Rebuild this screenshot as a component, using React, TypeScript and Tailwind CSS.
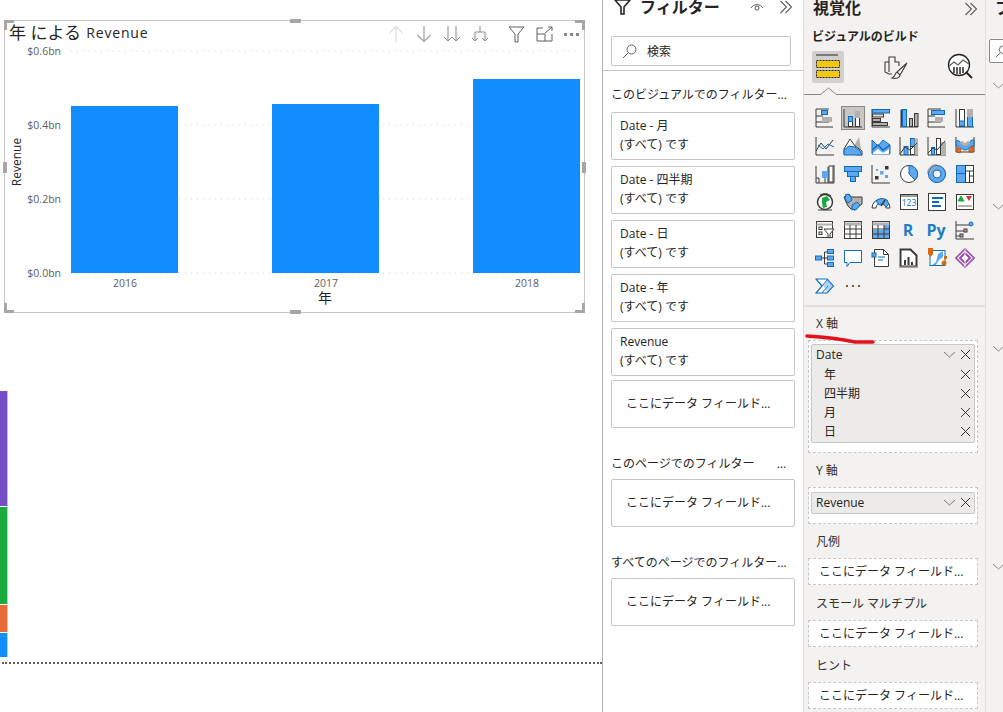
import React from "react";

const D = "#3b3a39";
const B = "#0f6cbd";
const F = "#5fa8ee";
const G = "#b3b0ad";

const Ic = ({ children }: { children: React.ReactNode }) => (
  <svg width="20" height="20" viewBox="0 0 20 20" fill="none" strokeWidth="1" className="block">
    {children}
  </svg>
);

const icons: React.ReactNode[] = [
  <><path d="M1 1v18h17M1 1h13M1 8h7M1 14h13" stroke={D} /><rect x="6.5" y="2.5" width="6" height="4" fill={F} stroke={B} /><rect x="7.5" y="9.5" width="9" height="4" fill={G} stroke={G} /></>,
  <><path d="M1 1v18h18" stroke={D} /><rect x="5.5" y="8.5" width="4" height="10" fill="#fff" stroke={D} /><rect x="5.5" y="8.5" width="4" height="5" fill={F} stroke={B} /><rect x="12.5" y="3.5" width="4" height="15" fill="#fff" stroke={D} /><rect x="12.5" y="3.5" width="4" height="6" fill={G} stroke={G} /></>,
  <><path d="M1 1v18h18" stroke={D} /><rect x="1.5" y="1.5" width="17" height="3.5" fill={F} stroke={B} /><rect x="1.5" y="6" width="11" height="3" fill="#ddd" stroke={D} /><rect x="1.5" y="10.5" width="8" height="3" fill={G} stroke={D} /><rect x="1.5" y="14.5" width="15" height="3" fill={G} stroke={D} /></>,
  <><path d="M1 19h18" stroke={D} /><rect x="1.5" y="1.5" width="4" height="17" fill={D} /><rect x="3.5" y="1.5" width="4" height="17" fill={F} stroke={B} /><rect x="10.5" y="10.5" width="3" height="8" fill={G} stroke={D} /><rect x="15.5" y="5.5" width="3.5" height="13" fill={G} stroke={D} /></>,
  <><path d="M1 1v18h17M1 1h13M1 8h7M1 14h13" stroke={D} /><rect x="4.5" y="2.5" width="13" height="4" fill={F} stroke={B} /><rect x="8.5" y="9.5" width="7" height="4" fill={G} stroke={G} /></>,
  <><path d="M1 1v18M1 19h18" stroke={D} /><rect x="4.5" y="1.5" width="5" height="17" fill="#fff" stroke={D} /><rect x="4.5" y="1.5" width="5" height="12" fill="#fff" stroke={D} /><rect x="4.5" y="13" width="5" height="5" fill={F} stroke={B} /><rect x="12.5" y="1.5" width="5" height="17" fill={F} stroke={B} /><rect x="12.5" y="1.5" width="5" height="7" fill={G} stroke={G} /></>,

  <><path d="M1 1v18h18" stroke={D} /><path d="M1 15l5-8 5 6 7-9" stroke={D} /><path d="M3 9l5 4 5-5 6 3" stroke={B} /></>,
  <><path d="M1 19l6-14 4 5 5-9 3 18z" fill={G} /><path d="M1 18V13L7 3l5 7 7 5v4z" fill="#fff" stroke={D} /><path d="M1 19v-5l5-4 6 1 5 4 2 4z" fill={F} stroke={B} /></>,
  <><path d="M1 4l6 6 5-6 7 5v9H1z" fill={F} stroke={B} /><path d="M1 14l6-5 5 5 7-5" stroke={B} strokeWidth="1.5" /><path d="M2 17l5-4 5 4 6-4v5H2z" fill="#fff" /></>,
  <><path d="M1 1v18h18" stroke={D} /><rect x="5" y="10.5" width="4" height="8" fill={F} stroke={B} /><rect x="11.5" y="2.5" width="4" height="8" fill={F} stroke={B} /><rect x="11.5" y="10.5" width="4" height="8" fill="#fff" stroke={D} /><rect x="15.5" y="2.5" width="3.5" height="16" fill={G} /><path d="M1 18l5-7 5 3 7-7" stroke={D} /></>,
  <><path d="M1 1v18h18" stroke={D} /><rect x="4.5" y="11.5" width="3" height="7" fill={F} stroke={B} /><rect x="9.5" y="2.5" width="4" height="16" fill="#fff" stroke={D} /><rect x="14.5" y="6.5" width="4" height="12" fill={G} stroke={G} /><path d="M1 17l5-5 4 2 8-9" stroke={D} /></>,
  <><path d="M1 1v15h18V1" stroke={D} /><path d="M1 5c5-2 5 5 9 5s4-7 9-6v6c-5 0-5 4-9 4S5 9 1 10z" fill={F} stroke={B} /><path d="M2 11l4 2-1 4-3-1zM14 13l4-3v6h-4z" fill="#e66c37" stroke="#b45309" /><path d="M6 6l4 3 4-3" stroke={G} strokeWidth="3" /></>,

  <><path d="M1 2v17h18V1M1 14h3v5M7 10h3v9M13 3v16" stroke={D} /><rect x="7" y="7" width="7" height="7" fill={F} /><rect x="14" y="2" width="4" height="16" fill="#fff" stroke={D} /></>,
  <><rect x="1.5" y="2.5" width="17" height="5" fill={F} stroke={B} /><rect x="4.5" y="7.5" width="11" height="5" fill={F} stroke={B} /><rect x="7.5" y="12.5" width="5" height="5" fill={F} stroke={B} /></>,
  <><path d="M1 1v18h18" stroke={D} /><rect x="14" y="2" width="3.5" height="3.5" fill={D} /><rect x="4" y="12" width="3.5" height="3.5" fill={D} /><rect x="9" y="7" width="3.5" height="3.5" fill={F} /><rect x="14" y="11" width="3" height="3" fill={F} /><rect x="5" y="5" width="2" height="2" fill={F} /></>,
  <><circle cx="10" cy="10" r="8.5" fill="#fff" stroke={D} /><path d="M10 1.5a8.5 8.5 0 0 1 6 14.5l-6-6z" fill={F} stroke={B} /></>,
  <><circle cx="10" cy="10" r="6.5" stroke={F} strokeWidth="5" /><path d="M10 1.5a8.5 8.5 0 0 0-8.5 8.5" stroke={G} strokeWidth="3.5" /><circle cx="10" cy="10" r="8.5" stroke={B} /><circle cx="10" cy="10" r="4" stroke={B} fill="#f3f2f1" /></>,
  <><rect x="1.5" y="1.5" width="9" height="8" fill={F} stroke={B} /><rect x="1.5" y="9.5" width="9" height="9" fill={F} stroke={B} /><rect x="10.5" y="1.5" width="8" height="17" fill="#fff" stroke={D} /><path d="M10.5 7h8M14.5 7v11.5M14.5 12h4" stroke={D} /></>,

  <><circle cx="10" cy="10" r="7.5" fill="#fff" stroke={D} strokeWidth="1.5" /><path d="M7 6l5-2 3 4-4 2 1 5-4 1-1-5z" fill="#1aab40" /><path d="M3 18h14M5 3c3-2 8-2 11 1" stroke={D} /></>,
  <><path d="M1 5l5-3 2 3h11v7l-4 3-3 3-4-1-3-3-2-4z" fill={G} stroke={D} /><path d="M3 2l4 1 2 5-4 3-3-4zM9 13l5-3 3 3-4 5-4-1z" fill={F} stroke={B} /></>,
  <><path d="M1 16a9 9 0 0 1 18 0h-4a5 5 0 0 0-10 0z" fill="#fff" stroke={D} /><path d="M5 9a9 9 0 0 1 11-1l2 4-3 3a5 5 0 0 0-7-2z" fill={F} stroke={B} /><path d="M10 14l4-6" stroke={D} strokeWidth="1.5" /></>,
  <><rect x="1.5" y="2.5" width="17" height="15" fill="#fff" stroke={D} /><path d="M1.5 4h17" stroke={D} /><text x="10" y="14" textAnchor="middle" fontSize="8.5" fill="#0f6cbd">123</text></>,
  <><rect x="1.5" y="1.5" width="17" height="17" fill="#fff" stroke={D} /><path d="M5 6h11M5 10h7M5 14h9" stroke={B} strokeWidth="2" /></>,
  <><rect x="1.5" y="2.5" width="17" height="15" fill="#fff" stroke={D} /><path d="M3 9l3-5 3 5z" fill="#1aab40" stroke="#1aab40" /><path d="M11 4h6l-3 5z" fill="#d13438" /><path d="M3 14h14" stroke={G} strokeWidth="2" /></>,

  <><rect x="1.5" y="1.5" width="16" height="16" fill="#fff" stroke={D} /><path d="M1.5 4.5h16" stroke={G} strokeWidth="2" /><rect x="4" y="7" width="3" height="2.5" stroke={D} /><rect x="4" y="12" width="3" height="2.5" stroke={D} /><path d="M9 9h10l-4 5v4l-2-1v-3z" fill="#fff" stroke={D} /></>,
  <><rect x="1.5" y="1.5" width="17" height="17" fill="#fff" stroke={D} /><path d="M1.5 4h17" stroke={G} strokeWidth="3" /><path d="M1.5 9h17M1.5 14h17M7 5v14M13 5v14" stroke={D} /></>,
  <><rect x="1.5" y="1.5" width="17" height="17" fill="#fff" stroke={D} /><rect x="2" y="10" width="16" height="8" fill={F} /><rect x="13" y="5" width="5" height="13" fill={F} /><path d="M1.5 4h17" stroke={G} strokeWidth="3" /><path d="M1.5 9h17M1.5 14h17M7 5v14M13 5v14" stroke={D} /></>,
  <text x="9" y="16" textAnchor="middle" fontSize="16" fontWeight="700" fill="#1f7fc4">R</text>,
  <text x="9" y="15.5" textAnchor="middle" fontSize="16" fontWeight="700" fill="#1f7fc4">Py</text>,
  <><path d="M1 1v18h18" stroke={D} /><path d="M1 5h14M1 11h8M1 16h4" stroke={D} /><circle cx="16" cy="4" r="2" fill={F} stroke={B} /><rect x="9" y="9" width="3" height="3" fill={G} stroke={D} /><rect x="5" y="14" width="3" height="3" fill={G} stroke={D} /></>,

  <><rect x="0.5" y="8" width="6" height="4" fill={F} stroke={B} /><path d="M6.5 10h3M9.5 4v12M9.5 4h3M9.5 10h3M9.5 16h3" stroke={D} /><rect x="12.5" y="1.5" width="6" height="4" fill={F} stroke={B} /><rect x="12.5" y="8" width="6" height="4" fill={F} stroke={B} /><rect x="12.5" y="14.5" width="6" height="4" fill={F} stroke={B} /></>,
  <path d="M1.5 2.5h17v12H7l-3 4v-4H1.5z" fill="#fff" stroke={B} />,
  <><path d="M3.5 1.5h9l5 5v12h-14z" fill="#fff" stroke={D} /><path d="M12.5 1.5v5h5" stroke={D} /><rect x="1" y="5" width="4" height="4" fill={F} stroke={B} /><path d="M7 9h7M7 12h5" stroke={B} /></>,
  <><path d="M1.5 1.5h10l6 6v11h-16z" fill="#fff" stroke={D} strokeWidth="2" /><rect x="5" y="12" width="2" height="5" fill={D} /><rect x="8.5" y="9" width="2" height="8" fill={D} /><rect x="12" y="14" width="2" height="3" fill={D} /><path d="M0 2v17h18" stroke={G} /></>,
  <><rect x="3" y="2.5" width="15" height="15" fill="#fff" stroke={B} /><path d="M5 17l4-3 2-8 5-3v6l-4 3-3 5z" fill={F} /><path d="M1 0h5v6l-2.5 3L1 6z" fill="#d96b0b" /><circle cx="17" cy="15" r="2.5" fill="#d96b0b" /><rect x="17" y="8" width="3" height="3" fill="#d96b0b" /></>,
  <><path d="M10 1l9 9-9 9-9-9z" fill="#fff" stroke="#9b4bb0" strokeWidth="1.6" /><path d="M10 5l5 5-5 5-5-5z" fill="none" stroke="#9b4bb0" strokeWidth="2" /><path d="M10 1v8M10 11v8" stroke="#f3f2f1" strokeWidth="1" /></>,

  <><path d="M1 3h11l6.5 7-6.5 7H1l6-7z" fill="#fff" stroke={B} strokeWidth="1.2" /><path d="M7 10l6-7M7 17l6-7" stroke={B} /><path d="M8 10l5-6 5 6-5 6z" fill={F} opacity="0.5" /></>,
  <><rect x="3" y="9" width="2" height="2" fill="#8a5a2b" /><rect x="9" y="9" width="2" height="2" fill="#8a5a2b" /><rect x="15" y="9" width="2" height="2" fill="#8a5a2b" /></>,
];

const Chevrons = () => (
  <svg width="14" height="14" viewBox="0 0 14 14" fill="none" stroke="#605e5c" strokeWidth="1.1">
    <path d="M1.5 1l6 6-6 6M6.5 1l6 6-6 6" />
  </svg>
);
const X = () => (
  <svg width="11" height="11" viewBox="0 0 11 11" fill="none" stroke="#252423" strokeWidth="0.9">
    <path d="M1 1l9 9M10 1l-9 9" />
  </svg>
);
const Down = ({ c = "#8a8886" }: { c?: string }) => (
  <svg width="13" height="7" viewBox="0 0 13 7" fill="none" stroke={c} strokeWidth="1">
    <path d="M1 1l5.5 5L12 1" />
  </svg>
);

const Toolbar = () => (
  <div className="flex items-center mr-[5px] mt-[3px]">
    <svg width="176" height="20" viewBox="0 0 176 20" fill="none" stroke="#8a8886" strokeWidth="1">
      <path d="M8 18V3M1.5 9L8 2.500 14.500 9" stroke="#e1dfdd" strokeWidth="1.3" />
      <path d="M36 2v15M29.500 11l6.500 6.500 6.500-6.500" stroke="#a19f9d" strokeWidth="1.2" />
      <path d="M60 2v15M56 13l4 4 4-4M68 2v15M64 13l4 4 4-4" />
      <path d="M92 2v6M87 8h10M87 8v9M97 8v9M84 14l3 3 3-3M94 14l3 3 3-3" />
      <path d="M121 3h15l-6 7v8h-3v-8z" stroke="#605e5c" />
      <path d="M155 4h-6v13h15V10M149 10h8v7M157 9l7-6M160 3h4v4" stroke="#605e5c" />
    </svg>
    <div className="flex gap-[3px]">
      <span className="w-[3px] h-[3px] bg-[#8a8886]" />
      <span className="w-[3px] h-[3px] bg-[#8a8886]" />
      <span className="w-[3px] h-[3px] bg-[#8a8886]" />
    </div>
  </div>
);

const Chart = () => {
  const dots = "1 5";
  return (
    <svg width="579" height="270" viewBox="5 41 579 270" className="block">
      {[51, 125, 199, 273].map((y) => (
        <line key={y} x1="71" x2="580" y1={y} y2={y} stroke="#d2d0ce" strokeDasharray={dots} />
      ))}
      {[
        ["$0.6bn", 55],
        ["$0.4bn", 129],
        ["$0.2bn", 203],
        ["$0.0bn", 277],
      ].map(([t, y]) => (
        <text key={t as string} x="61" y={y as number} textAnchor="end" fontSize="10.500" fill="#605e5c">
          {t}
        </text>
      ))}
      <rect x="71" y="106" width="107" height="167" fill="#118dff" />
      <rect x="272" y="104" width="107" height="169" fill="#118dff" />
      <rect x="473" y="79" width="107" height="194" fill="#118dff" />
      {[
        ["2016", 125],
        ["2017", 326],
        ["2018", 527],
      ].map(([t, x]) => (
        <text key={t as string} x={x as number} y="287" textAnchor="middle" fontSize="10.500" fill="#605e5c">
          {t}
        </text>
      ))}
      <text x="325" y="303" textAnchor="middle" fontSize="14" fill="#252423">
        年
      </text>
      <text x="21" y="162" textAnchor="middle" fontSize="12" fill="#252423" transform="rotate(-90 21 162)">
        Revenue
      </text>
    </svg>
  );
};

const Handles = () => (
  <>
    <span className="absolute -left-[1px] -top-[1px] w-[10px] h-[10px] border-l-[3px] border-t-[3px] border-[#a6a6a6]" />
    <span className="absolute -right-[1px] -top-[1px] w-[10px] h-[10px] border-r-[3px] border-t-[3px] border-[#a6a6a6]" />
    <span className="absolute -left-[1px] -bottom-[1px] w-[10px] h-[10px] border-l-[3px] border-b-[3px] border-[#a6a6a6]" />
    <span className="absolute -right-[1px] -bottom-[1px] w-[10px] h-[10px] border-r-[3px] border-b-[3px] border-[#a6a6a6]" />
    <span className="absolute left-[285px] -top-[2px] w-[11px] h-[4px] bg-[#a6a6a6]" />
    <span className="absolute left-[285px] -bottom-[2px] w-[11px] h-[4px] bg-[#a6a6a6]" />
    <span className="absolute -left-[2px] top-[141px] w-[4px] h-[11px] bg-[#a6a6a6]" />
    <span className="absolute -right-[2px] top-[141px] w-[4px] h-[11px] bg-[#a6a6a6]" />
  </>
);

const Canvas = () => (
  <div className="w-[602px] shrink-0 pt-[20px] bg-white">
    <div className="relative ml-[4px] w-[581px] h-[293px] border border-[#c8c6c4]">
      <Handles />
      <div className="flex items-start justify-between h-[20px]">
        <div className="ml-[4px] mt-[1px] h-[22px] flex items-center text-[17px] leading-[22px] text-[#252423] whitespace-pre">
          年 による <span className="ml-[1px] text-[14px] tracking-[0.8px]">Revenue</span>
        </div>
        <Toolbar />
      </div>
      <Chart />
    </div>
    <div className="mt-[78px] w-[8px] flex flex-col gap-[1px]">
      <div className="h-[115px] bg-[#744ec2] border-r border-[#c5b8e8]" />
      <div className="h-[97px] bg-[#1aab40] border-r border-[#a6ddb3]" />
      <div className="h-[27px] bg-[#e66c37] border-r border-[#f4c3ae]" />
      <div className="h-[24px] bg-[#118dff] border-r border-[#a6d4ff]" />
    </div>
    <div className="mt-[5px] ml-[2px] border-t-2 border-dotted border-[#605e5c]" />
  </div>
);

const FilterCard = ({ a, b }: { a: string; b: string }) => (
  <div className="h-[48px] w-[184px] mb-[6px] border border-[#c8c6c4] rounded-[2px] pl-[8px] pt-[3px] text-[12px] leading-[19px] text-[#252423]">
    <div>{a}</div>
    <div>{b}</div>
  </div>
);
const Drop = ({ cls = "" }: { cls?: string }) => (
  <div className={`h-[48px] w-[184px] border border-[#c8c6c4] rounded-[2px] pl-[14px] flex items-center text-[12px] text-[#252423] whitespace-nowrap ${cls}`}>
    ここにデータ フィールド...
  </div>
);

const FilterPanel = () => (
  <div className="w-[201px] shrink-0 border-l border-[#b3b0ad] bg-white flex flex-col">
    <div className="h-[14px] flex items-center pl-[11px] pr-[10px]">
      <svg width="18" height="16" viewBox="0 0 18 16" fill="none" stroke="#252423" strokeWidth="1.6">
        <path d="M1 1h15l-6 7v7H7V8z" />
      </svg>
      <span className="ml-[8px] text-[16px] font-bold text-[#252423] leading-[14px]">フィルター</span>
      <svg className="ml-auto mr-[15px]" width="14" height="10" viewBox="0 0 14 10" fill="none" stroke="#605e5c">
        <path d="M1 6a7 7 0 0 1 12 0" />
        <circle cx="7" cy="6" r="2" />
      </svg>
      <Chevrons />
    </div>
    <div className="mt-[22px] ml-[8px] w-[180px] h-[30px] border border-[#c8c6c4] rounded-[2px] flex items-center pl-[10px] gap-[10px] pt-[1px] text-[12px] text-[#252423]">
      <svg width="15" height="15" viewBox="0 0 15 15" fill="none" stroke="#605e5c">
        <circle cx="9.500" cy="5.500" r="4.500" />
        <path d="M6 9l-5 5" />
      </svg>
      検索
    </div>
    <div className="mt-[4px] border-b border-[#c8c6c4]" />
    <div className="mt-[16px] h-[16px] pl-[8px] text-[12px] leading-[16px] text-[#252423] whitespace-nowrap">
      このビジュアルでのフィルター…
    </div>
    <div className="mt-[9px] pl-[8px] flex flex-col">
      <FilterCard a="Date - 月" b="(すべて) です" />
      <FilterCard a="Date - 四半期" b="(すべて) です" />
      <FilterCard a="Date - 日" b="(すべて) です" />
      <FilterCard a="Date - 年" b="(すべて) です" />
      <FilterCard a="Revenue" b="(すべて) です" />
      <Drop cls="-mt-[2px]" />
    </div>
    <div className="mt-[28px] h-[16px] pl-[8px] pr-[17px] flex justify-between text-[12px] leading-[16px] text-[#252423]">
      <span>このページでのフィルター</span>
      <span>…</span>
    </div>
    <div className="mt-[7px] pl-[8px]">
      <Drop />
    </div>
    <div className="mt-[28px] h-[16px] pl-[8px] text-[12px] leading-[16px] text-[#252423] whitespace-nowrap">
      すべてのページでのフィルター…
    </div>
    <div className="mt-[7px] pl-[8px]">
      <Drop />
    </div>
  </div>
);

const Label = ({ t, cls = "mt-[9px]" }: { t: string; cls?: string }) => (
  <div className={`h-[20px] pl-[12px] flex items-center text-[12px] text-[#323130] ${cls}`}>{t}</div>
);
const Well = ({ children, cls }: { children: React.ReactNode; cls: string }) => (
  <div className={`ml-[4px] w-[170px] mt-[6px] bg-white border border-dashed border-[#c8c6c4] ${cls}`}>{children}</div>
);
const EmptyWell = () => (
  <Well cls="h-[27px] pl-[10px] pt-[1px] flex items-center text-[12px] text-[#252423] whitespace-nowrap">ここにデータ フィールド...</Well>
);
const Row = ({ t, sub, chev }: { t: string; sub?: boolean; chev?: boolean }) => (
  <div className={`h-[19px] flex items-center pr-[3px] text-[12px] leading-[19px] text-[#252423] ${sub ? "pl-[12px]" : "pl-[4px]"}`}>
    <span>{t}</span>
    <span className="ml-auto flex items-center gap-[4px]">
      {chev && <Down c="#7a7876" />}
      <X />
    </span>
  </div>
);

const FieldsIcon = () => (
  <svg width="24" height="26" viewBox="0 0 24 26" fill="none">
    <path d="M0 1h22" stroke="#252423" />
    <rect x="0.500" y="6.500" width="23" height="7" fill="#f2c811" stroke="#252423" strokeDasharray="2 1" />
    <rect x="0.500" y="16.500" width="23" height="7" fill="#f2c811" stroke="#252423" strokeDasharray="2 1" />
  </svg>
);

const VizPanel = () => (
  <div className="relative w-[182px] shrink-0 border-l border-[#e1dfdd] bg-[#f3f2f1] flex flex-col">
    <div className="h-[18px] flex items-center justify-between pl-[9px] pr-[7px]">
      <span className="text-[16px] font-bold text-[#252423] leading-[16px] -mt-[2px]">視覚化</span>
      <Chevrons />
    </div>
    <div className="mt-[11px] h-[16px] pl-[8px] text-[12px] leading-[16px] font-semibold text-[#252423]">ビジュアルのビルド</div>
    <div className="mt-[6px] h-[32px] flex items-center pl-[8px]">
      <div className="w-[32px] h-[32px] rounded-[2px] bg-[#d2d0ce] flex items-center justify-center">
        <FieldsIcon />
      </div>
      <svg className="ml-[40px]" width="24" height="26" viewBox="0 0 24 26" fill="none" stroke="#3b3a39" strokeWidth="1.1">
        <path d="M1 18V8h4v10M5 9V3h6v5h4v4M1 18l4 2h3" />
        <path d="M23 9L13 18l3 3zM13 18c-2 1-1 4-5 6 4 1 8 0 8-3" fill="#fff" />
      </svg>
      <svg className="ml-[39px]" width="26" height="28" viewBox="0 0 26 28" fill="none" stroke="#252423" strokeWidth="1.3">
        <circle cx="12" cy="12" r="10.500" fill="#fff" />
        <path d="M2 13l5-4 4 3 5-5 6 4" stroke="#605e5c" />
        <path d="M7 14v6M10 14v7M13 14v7M16 14v6" stroke="#605e5c" strokeWidth="2" />
        <path d="M19 19l6 6" strokeWidth="2" />
      </svg>
    </div>
    <div className="relative mt-[11px] border-b border-[#8a8886]">
      <svg className="absolute left-[16px] -top-[7px]" width="17" height="9" viewBox="0 0 17 9" fill="#f3f2f1" stroke="#8a8886">
        <path d="M0 8l8.500-7L17 8" />
      </svg>
    </div>
    <div className="mt-[13px] pl-[7px] grid grid-cols-[repeat(6,28px)] auto-rows-[28px]">
      {icons.map((ic, i) => (
        <div key={i} className="flex items-start justify-center">
          <div className={i === 1 ? "w-[24px] h-[24px] -mt-[2px] flex items-center justify-center bg-[#c8c6c4] border border-[#8a8886]" : ""}>
            <Ic>{ic}</Ic>
          </div>
        </div>
      ))}
    </div>
    <div className="mt-[1px] h-[2px] bg-[#e1dfdd]" />
    <Label t="X 軸" cls="mt-[7px]" />
    <div className="relative">
      <svg className="absolute -left-[2px] -top-[1px] z-10" width="74" height="12" viewBox="0 0 74 12" fill="none" stroke="#e3101e" strokeWidth="3.5" strokeLinecap="round">
        <path d="M5 3c18 1 34 3 48 6 6 0 12 0 18 0" />
      </svg>
    </div>
    <Well cls="h-[113px] mt-[5px] pt-[3px] pl-[2px]">
      <div className="w-[164px] h-[99px] bg-[#edebe9] border border-[#c8c6c4] rounded-[2px]">
        <Row t="Date" chev />
        <div className="mt-[1px]">
          <Row t="年" sub />
          <Row t="四半期" sub />
          <Row t="月" sub />
          <Row t="日" sub />
        </div>
      </div>
    </Well>
    <Label t="Y 軸" cls="mt-[8px]" />
    <Well cls="h-[37px] pt-[4px] pl-[2px]">
      <div className="w-[164px] h-[22px] bg-[#edebe9] border border-[#c8c6c4] rounded-[2px]">
        <Row t="Revenue" chev />
      </div>
    </Well>
    <Label t="凡例" cls="mt-[8px]" />
    <EmptyWell />
    <Label t="スモール マルチプル" />
    <EmptyWell />
    <Label t="ヒント" />
    <EmptyWell />
  </div>
);

const FieldsPanel = () => (
  <div className="flex-1 border-l border-[#e1dfdd] bg-[#f3f2f1] flex flex-col overflow-hidden">
    <div className="h-[18px] pl-[9px] text-[16px] font-bold leading-[16px] text-[#252423] whitespace-nowrap">フ</div>
    <div className="mt-[21px] ml-[3px] h-[24px] w-[40px] bg-white border border-[#8a8886] rounded-[2px] flex items-center pl-[5px]">
      <svg width="13" height="13" viewBox="0 0 15 15" fill="none" stroke="#605e5c">
        <circle cx="9.500" cy="5.500" r="4.500" />
        <path d="M6 9l-5 5" />
      </svg>
    </div>
    <div className="mt-[19px] ml-[6px]"><Down /></div>
    <div className="mt-[114px] ml-[6px]"><Down /></div>
    <div className="mt-[135px] ml-[6px]"><Down /></div>
    <div className="mt-[211px] ml-[6px]"><Down /></div>
  </div>
);

export default function App() {
  return (
    <div className="flex w-[1003px] h-[712px] overflow-hidden bg-white font-['Open_Sans','Noto_Sans_CJK_JP',sans-serif]">
      <Canvas />
      <FilterPanel />
      <VizPanel />
      <FieldsPanel />
    </div>
  );
}
